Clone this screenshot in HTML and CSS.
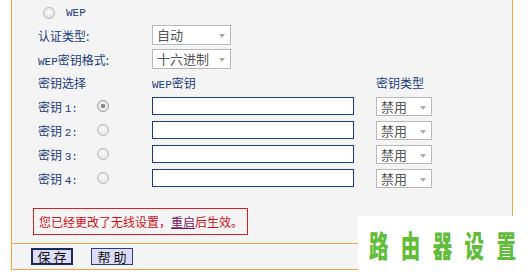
FILE: index.html
```html
<!DOCTYPE html>
<html lang="zh-CN">
<head>
    <meta charset="UTF-8">
    <title>无线安全设置</title>
    <link rel="stylesheet" href="styles.css">
</head>
<body>
    <div class="panel">
        <div class="form">
            <div class="row row-wep">
                <span class="radio"></span>
                <span class="mono">WEP</span>
            </div>
            <div class="row row-opt">
                <span class="label span2">认证类型:</span>
                <span class="select select-wide">自动</span>
            </div>
            <div class="row row-opt">
                <span class="label span2"><span class="mono">WEP</span>密钥格式:</span>
                <span class="select select-wide">十六进制</span>
            </div>
            <div class="row row-head">
                <span class="label span2">密钥选择</span>
                <span class="label"><span class="mono">WEP</span>密钥</span>
                <span class="label">密钥类型</span>
            </div>
            <div class="row row-key">
                <span class="label">密钥 <span class="mono">1:</span></span>
                <span class="radio checked"></span>
                <span class="input"></span>
                <span class="select select-small">禁用</span>
            </div>
            <div class="row row-key">
                <span class="label">密钥 <span class="mono">2:</span></span>
                <span class="radio"></span>
                <span class="input"></span>
                <span class="select select-small">禁用</span>
            </div>
            <div class="row row-key">
                <span class="label">密钥 <span class="mono">3:</span></span>
                <span class="radio"></span>
                <span class="input"></span>
                <span class="select select-small">禁用</span>
            </div>
            <div class="row row-key">
                <span class="label">密钥 <span class="mono">4:</span></span>
                <span class="radio"></span>
                <span class="input"></span>
                <span class="select select-small">禁用</span>
            </div>
            <div class="notice">您已经更改了无线设置，<a href="#" class="reboot">重启</a>后生效。</div>
        </div>
        <div class="buttons">
            <span class="btn btn-active">保 存</span>
            <span class="btn">帮 助</span>
        </div>
    </div>
    <div class="watermark"><span>路由器设置</span></div>
</body>
</html>
```

FILE: styles.css
```css
body {
    margin: 0;
    background: #fff;
    font-family: "Noto Sans CJK SC", "DejaVu Sans", sans-serif;
    font-size: 12px;
    color: #1c3b7c;
}
.panel {
    margin-left: 11px;
    width: 500px;
    border-left: 1px solid #f3a64c;
    border-right: 1px solid #f3a64c;
    border-bottom: 1px solid #f3a64c;
    background: #f4f4f4;
}
.form {
    padding: 3px 0 0 26px;
    height: 240px;
    border-bottom: 1px solid #f3a64c;
}
.row {
    display: grid;
    grid-template-columns: 59px 55px 224px 1fr;
    align-items: center;
}
.row-wep {
    display: flex;
    gap: 11px;
    height: 20px;
    padding-left: 5px;
}
.row-opt {
    height: 24px;
}
.row-head {
    height: 23px;
}
.row-key {
    height: 24px;
}
.span2 {
    grid-column: span 2;
}
.label {
    white-space: nowrap;
}
.mono {
    font-family: "Liberation Mono", monospace;
    font-size: 11px;
}
.radio {
    display: block;
    width: 12px;
    height: 12px;
    box-sizing: border-box;
    border-radius: 50%;
    border: 1px solid #bcbcbc;
    background: radial-gradient(circle at 50% 40%, #fafafa, #dedede);
}
.radio.checked {
    border-color: #a0a0a0;
    background: radial-gradient(circle, #888 0, #888 2px, #f0f0f0 2.5px, #dadada 100%);
}
.select {
    position: relative;
    display: block;
    box-sizing: border-box;
    border: 1px solid #b8b8b8;
    background: #fff;
    color: #555;
    font-size: 13px;
    line-height: 18px;
    padding-left: 4px;
}
.select::after {
    content: "";
    position: absolute;
    right: 5px;
    top: 8px;
    border-left: 3px solid transparent;
    border-right: 3px solid transparent;
    border-top: 4px solid #aaa;
}
.select-wide {
    width: 79px;
    height: 20px;
}
.select-small {
    width: 56px;
    height: 19px;
    line-height: 17px;
}
.input {
    display: block;
    box-sizing: border-box;
    width: 202px;
    height: 18px;
    border: 1px solid #1b3a84;
    background: #fff;
}
.notice {
    margin: 18px 0 0 -5px;
    width: 215px;
    height: 27px;
    box-sizing: border-box;
    border: 1px solid #d21f2a;
    color: #d0101c;
    font-size: 12px;
    line-height: 25px;
    padding-left: 5px;
    white-space: nowrap;
}
.reboot {
    color: #7b1458;
}
.buttons {
    display: flex;
    gap: 18px;
    height: 25px;
    align-items: center;
    padding-left: 19px;
}
.btn {
    box-sizing: border-box;
    width: 42px;
    height: 17px;
    border: 1px solid #2a3d80;
    background: #dcdcf8;
    color: #111;
    font-size: 13px;
    line-height: 15px;
    text-align: center;
}
.btn-active {
    border: 2px solid #1b2a5a;
    line-height: 13px;
}
.watermark {
    position: absolute;
    left: 358px;
    top: 216px;
    width: 172px;
    height: 60px;
    background: #fff;
}
.watermark span {
    position: absolute;
    left: 11px;
    top: 12px;
    font-size: 30px;
    line-height: 32px;
    font-weight: 900;
    letter-spacing: 19px;
    color: #62bd3a;
    white-space: nowrap;
    transform: scaleX(0.65);
    transform-origin: left top;
}
```
